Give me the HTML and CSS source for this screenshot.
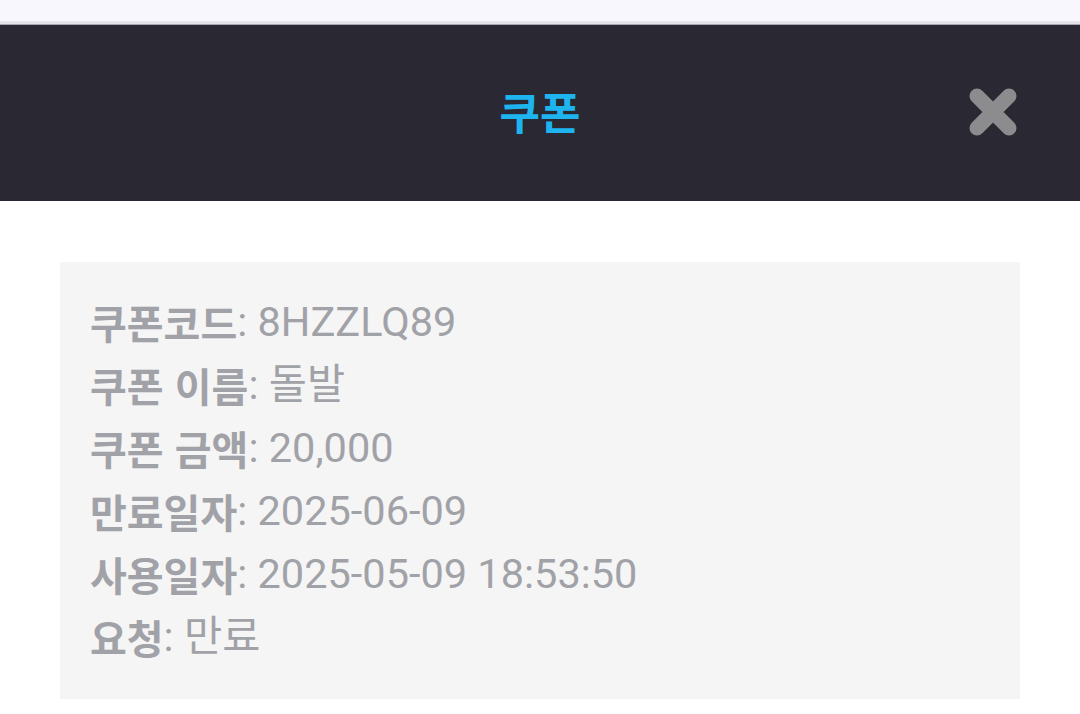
FILE: index.html
```html
<!DOCTYPE html>
<html lang="ko">
  <head>
    <meta charset="UTF-8" />
    <meta name="viewport" content="width=device-width, initial-scale=1.0" />
    <title>쿠폰</title>
    <link rel="stylesheet" href="styles.css">
  </head>
  <body>
    <div class="status-strip"></div>
    <div class="header">
      <div class="header-title">쿠폰</div>
      <button class="close-btn" aria-label="닫기">
        <svg width="50" height="50" viewBox="0 0 50 50">
          <path d="M9 9 L41 41 M41 9 L9 41" stroke="#8c8c8e" stroke-width="15" stroke-linecap="round" />
        </svg>
      </button>
    </div>
    <div class="content">
      <div class="coupon-box">
        <div class="row"><span class="label">쿠폰코드</span><span class="value">: 8HZZLQ89</span></div>
        <div class="row"><span class="label">쿠폰 이름</span><span class="value">: 돌발</span></div>
        <div class="row"><span class="label">쿠폰 금액</span><span class="value">: 20,000</span></div>
        <div class="row"><span class="label">만료일자</span><span class="value">: 2025-06-09</span></div>
        <div class="row"><span class="label">사용일자</span><span class="value">: 2025-05-09 18:53:50</span></div>
        <div class="row"><span class="label">요청</span><span class="value">: 만료</span></div>
      </div>
    </div>
  </body>
</html>
```

FILE: styles.css
```css
body {
  margin: 0;
  padding: 0;
  background: #fff;
  font-family: Roboto, "Noto Sans CJK KR", sans-serif;
  overflow: hidden;
}

.status-strip {
  height: 21px;
  background: #f8f7fd;
  border-bottom: 3px solid #e5e3ec;
}

.header {
  height: 176px;
  background: #2a2933;
  border-top: 1px solid #a9a8ae;
  display: flex;
  align-items: center;
  justify-content: center;
  position: relative;
}

.header-title {
  color: #1eb4ef;
  font-family: "Noto Sans CJK KR", sans-serif;
  font-weight: 700;
  font-size: 44px;
  line-height: 1;
  margin-top: -4px;
}

.close-btn {
  position: absolute;
  right: 62px;
  top: 62px;
  width: 50px;
  height: 50px;
  padding: 0;
  border: none;
  background: none;
  cursor: pointer;
}

.close-btn svg {
  display: block;
}

.content {
  padding: 61px 60px 0;
}

.coupon-box {
  background: #f5f5f5;
  padding: 28px 30px 31px;
  color: #a1a2a7;
}

.row {
  display: flex;
  align-items: center;
  height: 63px;
  white-space: pre;
}

.label {
  font-family: "Noto Sans CJK KR", sans-serif;
  font-weight: 700;
  font-size: 40px;
  line-height: 1;
}

.value {
  font-size: 41.5px;
  line-height: 1;
}
```
